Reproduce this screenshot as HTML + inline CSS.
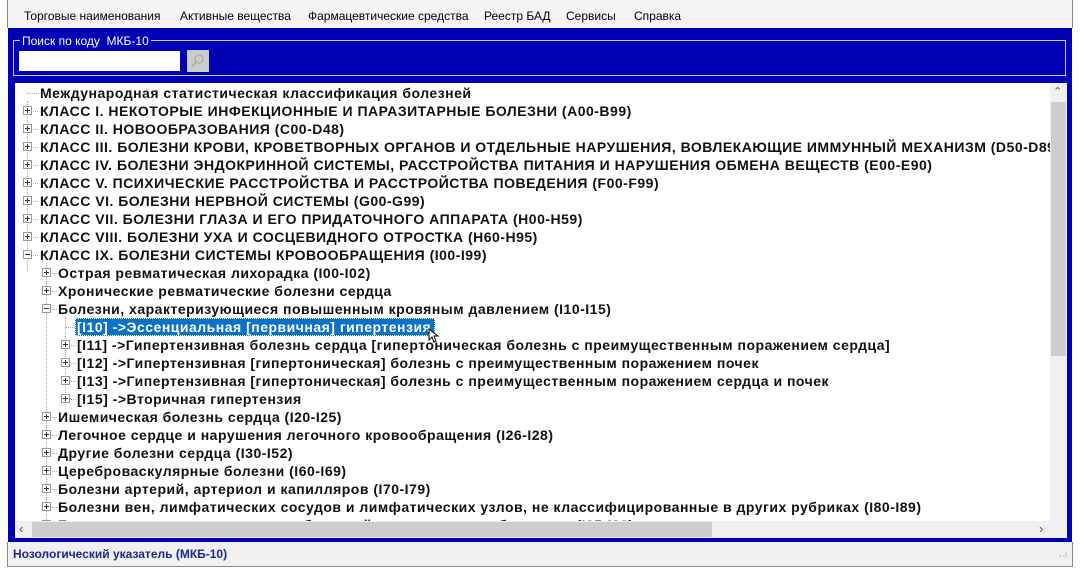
<!DOCTYPE html>
<html><head><meta charset="utf-8"><style>
*{margin:0;padding:0;box-sizing:border-box}
body{width:1080px;height:571px;background:#fff;position:relative;overflow:hidden;font-family:"Liberation Sans",Arial,sans-serif}
.abs{position:absolute}
#menu{left:7px;top:0;width:1066px;height:28px;background:#f5f5f8;border-left:1px solid #888;border-right:1px solid #888;font-size:12px;color:#000}
#menu span{position:absolute;top:9px}
#blue{left:8px;top:28px;width:1064px;height:514px;background:#0000b4}
#grp{left:13px;top:40px;width:1053px;height:36px;border:1px solid #c8c8e8}
#tree{left:15px;top:83px;width:1052px;height:455px;background:#fff;overflow:hidden}
.r{position:absolute;white-space:nowrap;font-weight:bold;font-size:14px;letter-spacing:0.5px;color:#111;line-height:18px;height:18px}
.pb{position:absolute;width:9px;height:9px;border:1px solid #999;background:#fff}
.pb::before{content:"";position:absolute;left:1px;top:3px;width:5px;height:1px;background:#333}
.pb.p::after{content:"";position:absolute;left:3px;top:1px;width:1px;height:5px;background:#333}
.vl{position:absolute;border-left:1px dotted #aaa}
.hl{position:absolute;border-top:1px dotted #aaa}
#status{left:7px;top:542px;width:1066px;height:25px;background:#f0f0f0;border:1px solid #888;border-top:none}
</style></head><body>
<div id="menu" class="abs">
<span style="left:16px">Торговые наименования</span>
<span style="left:172px">Активные вещества</span>
<span style="left:300px">Фармацевтические средства</span>
<span style="left:476px">Реестр БАД</span>
<span style="left:558px">Сервисы</span>
<span style="left:626px">Справка</span>
</div>
<div id="blue" class="abs"></div>
<div id="grp" class="abs"></div>
<div class="abs" style="left:20px;top:34px;background:#0000b4;color:#fff;font-size:12px;padding:0 2px">Поиск по коду&nbsp; МКБ-10</div>
<div class="abs" style="left:19px;top:51px;width:161px;height:20px;background:#fff"></div>
<div class="abs" style="left:187px;top:50px;width:22px;height:22px;background:#ccc"><svg width="22" height="22"><circle cx="12" cy="9" r="4" fill="none" stroke="#aaa" stroke-width="1.3"/><line x1="9" y1="12" x2="5" y2="17" stroke="#aaa" stroke-width="1.5"/></svg></div>
<div id="tree" class="abs">
<div class="vl" style="left:12px;top:18px;height:170px"></div>
<div class="vl" style="left:31px;top:180px;height:275px"></div>
<div class="vl" style="left:50px;top:234px;height:90px"></div>
<div class="hl" style="left:12px;top:10px;width:12px"></div>
<div id="rows"></div>
<div class="abs" style="left:60px;top:235px;width:360px;height:18px;background:#0b72c8;border:1px dotted #fff"></div>
<div class="r" style="left:62px;top:235px;color:#fff">[I10] -&gt;Эссенциальная [первичная] гипертензия</div>
<svg class="abs" style="left:413px;top:245px" width="12" height="16"><path d="M1 1 L1 12 L4 9 L6 14 L8 13 L6 8 L10 8 Z" fill="#fff" stroke="#000" stroke-width="1"/></svg>
<div class="abs" style="left:1035px;top:0;width:17px;height:438px;background:#f0f0f0"></div>
<div class="abs" style="left:1036px;top:19px;width:15px;height:254px;background:#cdcdcd"></div>
<div class="abs" style="left:1038px;top:2px;font-size:11px;color:#555">&#8963;</div>
<div class="abs" style="left:1039px;top:434px;font-size:10px;color:#555">&#8964;</div>
<div class="abs" style="left:0;top:438px;width:1052px;height:17px;background:#f0f0f0"></div>
<div class="abs" style="left:17px;top:439px;width:680px;height:15px;background:#cdcdcd"></div>
<div class="abs" style="left:4px;top:438px;font-size:13px;color:#555">&lsaquo;</div>
<div class="abs" style="left:1024px;top:438px;font-size:13px;color:#555">&rsaquo;</div>
</div>
<div id="status" class="abs"><div class="abs" style="left:5px;top:5px;font-size:12px;font-weight:bold;color:#1a2a8a">Нозологический указатель (МКБ-10)</div>
<div class="abs" style="right:4px;top:8px;font-size:8px;color:#999">⠠⠴</div></div>
<script>
var L=[[0,"Международная статистическая классификация болезней",0],
[0,"КЛАСС I. НЕКОТОРЫЕ ИНФЕКЦИОННЫЕ И ПАРАЗИТАРНЫЕ БОЛЕЗНИ (A00-B99)",1],
[0,"КЛАСС II. НОВООБРАЗОВАНИЯ (C00-D48)",1],
[0,"КЛАСС III. БОЛЕЗНИ КРОВИ, КРОВЕТВОРНЫХ ОРГАНОВ И ОТДЕЛЬНЫЕ НАРУШЕНИЯ, ВОВЛЕКАЮЩИЕ ИММУННЫЙ МЕХАНИЗМ (D50-D89)",1],
[0,"КЛАСС IV. БОЛЕЗНИ ЭНДОКРИННОЙ СИСТЕМЫ, РАССТРОЙСТВА ПИТАНИЯ И НАРУШЕНИЯ ОБМЕНА ВЕЩЕСТВ (E00-E90)",1],
[0,"КЛАСС V. ПСИХИЧЕСКИЕ РАССТРОЙСТВА И РАССТРОЙСТВА ПОВЕДЕНИЯ (F00-F99)",1],
[0,"КЛАСС VI. БОЛЕЗНИ НЕРВНОЙ СИСТЕМЫ (G00-G99)",1],
[0,"КЛАСС VII. БОЛЕЗНИ ГЛАЗА И ЕГО ПРИДАТОЧНОГО АППАРАТА (H00-H59)",1],
[0,"КЛАСС VIII. БОЛЕЗНИ УХА И СОСЦЕВИДНОГО ОТРОСТКА (H60-H95)",1],
[0,"КЛАСС IX. БОЛЕЗНИ СИСТЕМЫ КРОВООБРАЩЕНИЯ (I00-I99)",2],
[1,"Острая ревматическая лихорадка (I00-I02)",1],
[1,"Хронические ревматические болезни сердца",1],
[1,"Болезни, характеризующиеся повышенным кровяным давлением (I10-I15)",2],
[2,"",0],
[2,"[I11] ->Гипертензивная болезнь сердца [гипертоническая болезнь с преимущественным поражением сердца]",1],
[2,"[I12] ->Гипертензивная [гипертоническая] болезнь с преимущественным поражением почек",1],
[2,"[I13] ->Гипертензивная [гипертоническая] болезнь с преимущественным поражением сердца и почек",1],
[2,"[I15] ->Вторичная гипертензия",1],
[1,"Ишемическая болезнь сердца (I20-I25)",1],
[1,"Легочное сердце и нарушения легочного кровообращения (I26-I28)",1],
[1,"Другие болезни сердца (I30-I52)",1],
[1,"Цереброваскулярные болезни (I60-I69)",1],
[1,"Болезни артерий, артериол и капилляров (I70-I79)",1],
[1,"Болезни вен, лимфатических сосудов и лимфатических узлов, не классифицированные в других рубриках (I80-I89)",1],
[1,"Болезни других и неуточненных болезней системы кровообращения (I95-I99)",1]];
var h="",tx=[25,43,62],bx=[8,27,46];
L.forEach(function(a,i){var y=i*18+1;
if(a[1])h+='<div class="r" style="left:'+tx[a[0]]+'px;top:'+y+'px">'+a[1].replace(/>/g,"&gt;")+'</div>';
if(a[2])h+='<div class="pb'+(a[2]==1?' p':'')+'" style="left:'+bx[a[0]]+'px;top:'+(y+4)+'px"></div><div class="hl" style="left:'+(bx[a[0]]+10)+'px;top:'+(y+9)+'px;width:5px"></div>';
else if(i==13)h+='<div class="hl" style="left:50px;top:'+(y+9)+'px;width:10px"></div>';});
document.getElementById("rows").innerHTML=h;
</script>
</body></html>
